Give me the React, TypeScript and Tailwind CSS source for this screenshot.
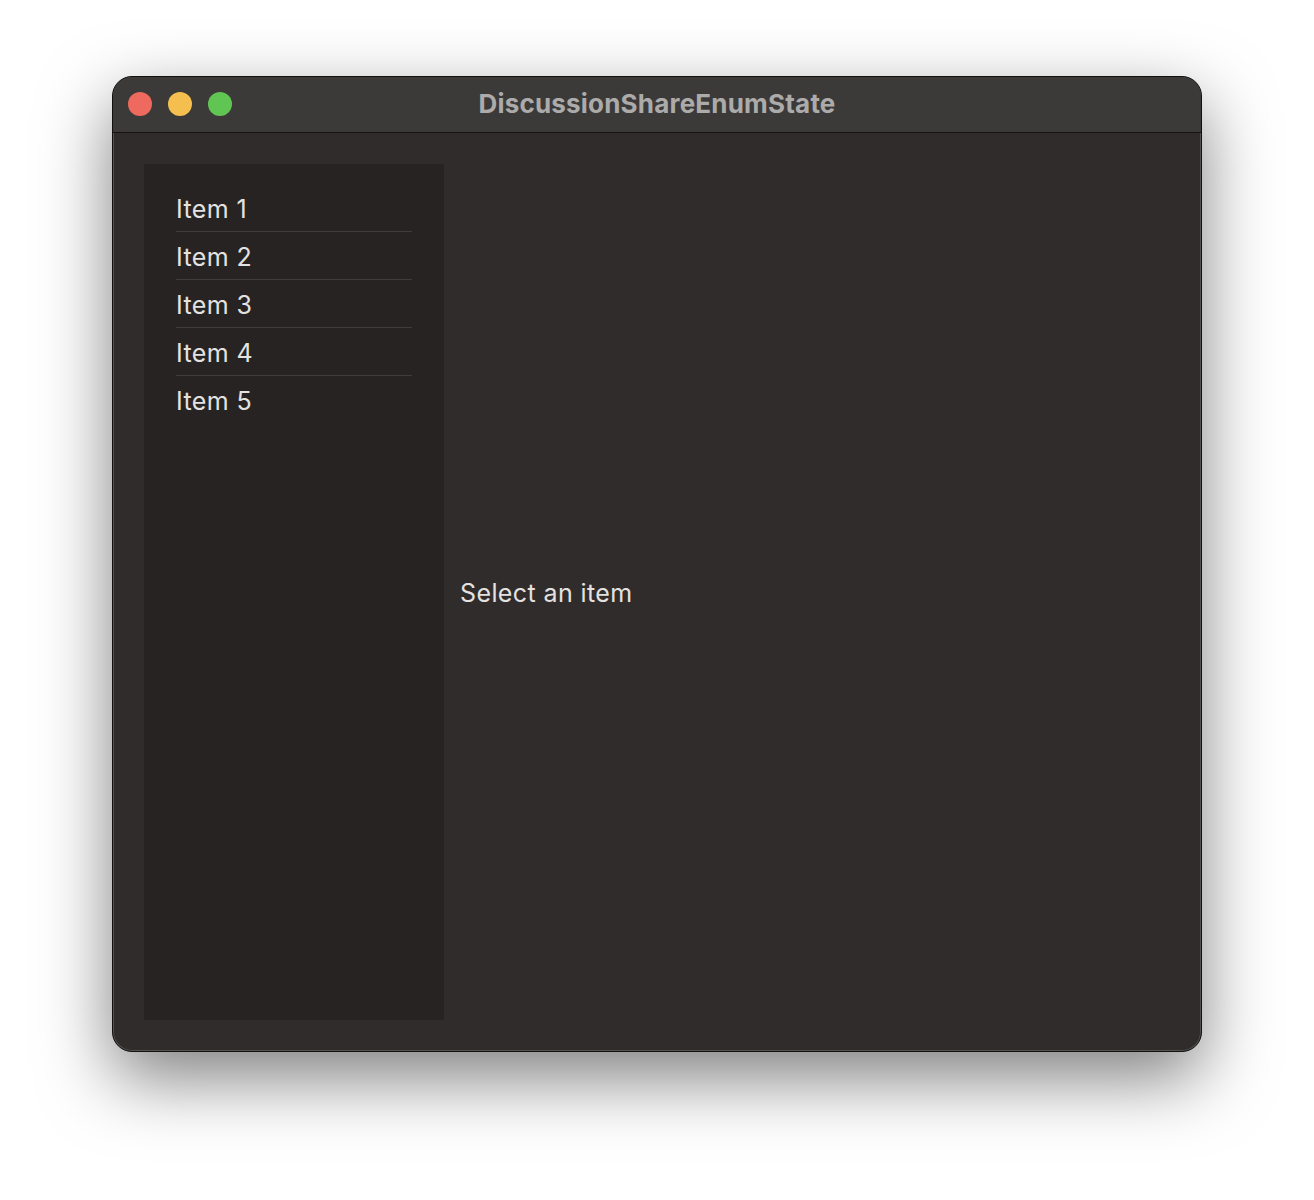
const ITEMS = ["Item 1", "Item 2", "Item 3", "Item 4", "Item 5"];

function TrafficLights() {
  return (
    <div className="absolute left-[15px] top-[15px] flex gap-[16px]">
      <span className="block h-[24px] w-[24px] rounded-full bg-[#ee6a5f]" />
      <span className="block h-[24px] w-[24px] rounded-full bg-[#f5bf4f]" />
      <span className="block h-[24px] w-[24px] rounded-full bg-[#61c554]" />
    </div>
  );
}

export default function App() {
  return (
    <div
      className="flex h-[1200px] w-full justify-center bg-white pt-[76px]"
      style={{ fontFamily: "Inter, 'Noto Sans', sans-serif" }}
    >
      <div className="flex h-[976px] w-[1090px] flex-col overflow-hidden rounded-[20px] border border-[#111] bg-[#302c2b] shadow-[0_26px_70px_rgba(0,0,0,0.5),inset_0_0_0_1px_rgba(255,255,255,0.18)]">
        {/* title bar */}
        <div className="relative flex h-[56px] shrink-0 items-center justify-center border-b border-[#141212] bg-[#3b3a39] pb-[2px]">
          <TrafficLights />
          <span className="text-[26px] font-bold tracking-[0.2px] text-[#acabaa]">
            DiscussionShareEnumState
          </span>
        </div>

        {/* body */}
        <div className="flex flex-1 p-[31px]">
          <div className="w-[300px] shrink-0 bg-[#272322] px-[32px] pt-[20px]">
            {ITEMS.map((item, i) => (
              <div
                key={item}
                className={
                  i < ITEMS.length - 1
                    ? "border-b border-[#3f3c3b] pt-[12px] pb-[9px] text-[25px] leading-[26px] tracking-[0.4px] text-[#e4e2e1]"
                    : "pt-[12px] pb-[9px] text-[25px] leading-[26px] tracking-[0.4px] text-[#e4e2e1]"
                }
              >
                {item}
              </div>
            ))}
          </div>
          <div className="flex flex-1 items-center pl-[16px] pt-[4px]">
            <span className="text-[25px] tracking-[0.4px] text-[#e4e2e1]">Select an item</span>
          </div>
        </div>
      </div>
    </div>
  );
}
